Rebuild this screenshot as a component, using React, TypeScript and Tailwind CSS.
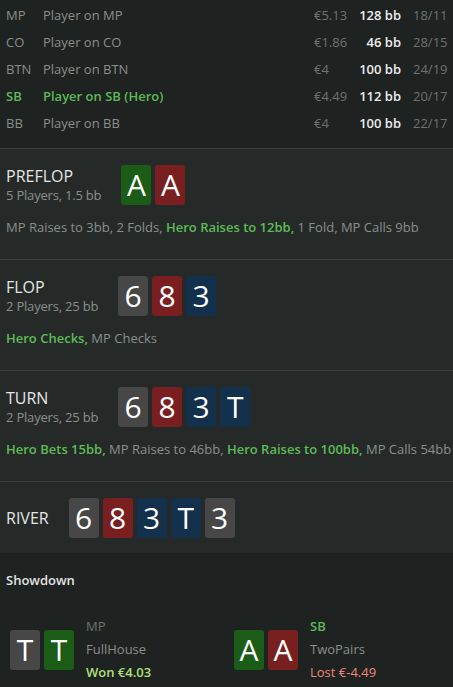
import React from "react";

type Suit = "g" | "r" | "b" | "k";

const suitBg: Record<Suit, string> = {
  g: "bg-[#1b5c17]",
  r: "bg-[#7a1f1f]",
  b: "bg-[#13314c]",
  k: "bg-[#474747]",
};

const Card = ({ rank, suit }: { rank: string; suit: Suit }) => (
  <div
    className={`w-[30px] h-[40px] rounded-[3px] flex items-center justify-center text-white text-[30px] leading-none ${suitBg[suit]}`}
  >
    {rank}
  </div>
);

const players = [
  { pos: "MP", name: "Player on MP", stake: "€5.13", bb: "128 bb", stats: "18/11" },
  { pos: "CO", name: "Player on CO", stake: "€1.86", bb: "46 bb", stats: "28/15" },
  { pos: "BTN", name: "Player on BTN", stake: "€4", bb: "100 bb", stats: "24/19" },
  { pos: "SB", name: "Player on SB (Hero)", stake: "€4.49", bb: "112 bb", stats: "20/17", hero: true },
  { pos: "BB", name: "Player on BB", stake: "€4", bb: "100 bb", stats: "22/17" },
];

type Act = { text: string; hero?: boolean };

const Street = ({
  title,
  sub,
  cards,
  actions,
}: {
  title: string;
  sub?: string;
  cards: [string, Suit][];
  actions?: Act[];
}) => (
  <section className={`bg-[#252a28] border-t border-[#3b3f3d] px-[6px] pt-4 ${actions ? "pb-[22px]" : "pb-[15px]"}`}>
    <div className="flex items-center gap-[20px]">
      <div className="flex flex-col">
        <div className="text-[16px] leading-[20px] text-[#e6e6e6]">{title}</div>
        {sub && <div className="text-[13px] leading-[18px] text-[#8b8e8d] tracking-[-0.2px]">{sub}</div>}
      </div>
      <div className="flex gap-[4px]">
        {cards.map(([r, s], i) => (
          <Card key={i} rank={r} suit={s} />
        ))}
      </div>
    </div>
    {actions && (
      <div className="mt-3 text-[13px] leading-[20px] text-[#8b8e8d] whitespace-nowrap">
        {actions.map((a, i) => (
          <span key={i} className={a.hero ? "font-semibold text-[#5dba57]" : ""}>
            {a.text}
            {i < actions.length - 1 ? ", " : ""}
          </span>
        ))}
      </div>
    )}
  </section>
);

export default function App() {
  return (
    <div className="w-[453px] h-[687px] overflow-hidden bg-[#1e2220] font-['Open_Sans',sans-serif]">
      {/* Players table */}
      <div className="px-[6px] pt-[2px] pb-[11px] text-[13px]">
        {players.map((p) => (
          <div key={p.pos} className="flex items-center h-[27px]">
            <div className={`w-[37px] ${p.hero ? "font-semibold text-[#5dba57]" : "text-[#8b8e8d]"}`}>{p.pos}</div>
            <div className={`flex-1 ${p.hero ? "font-semibold text-[#5dba57]" : "text-[#8b8e8d]"}`}>{p.name}</div>
            <div className="w-[45px] text-[#6f7271]">{p.stake}</div>
            <div className="w-[42px] text-right font-semibold text-[#ececec] whitespace-nowrap">{p.bb}</div>
            <div className="w-[34px] ml-[12px] text-[#6f7271]">{p.stats}</div>
          </div>
        ))}
      </div>

      <Street
        title="PREFLOP"
        sub="5 Players, 1.5 bb"
        cards={[["A", "g"], ["A", "r"]]}
        actions={[
          { text: "MP Raises to 3bb" },
          { text: "2 Folds" },
          { text: "Hero Raises to 12bb", hero: true },
          { text: "1 Fold" },
          { text: "MP Calls 9bb" },
        ]}
      />
      <Street
        title="FLOP"
        sub="2 Players, 25 bb"
        cards={[["6", "k"], ["8", "r"], ["3", "b"]]}
        actions={[{ text: "Hero Checks", hero: true }, { text: "MP Checks" }]}
      />
      <Street
        title="TURN"
        sub="2 Players, 25 bb"
        cards={[["6", "k"], ["8", "r"], ["3", "b"], ["T", "b"]]}
        actions={[
          { text: "Hero Bets 15bb", hero: true },
          { text: "MP Raises to 46bb" },
          { text: "Hero Raises to 100bb", hero: true },
          { text: "MP Calls 54bb" },
        ]}
      />
      <Street title="RIVER" cards={[["6", "k"], ["8", "r"], ["3", "b"], ["T", "b"], ["3", "k"]]} />

      {/* Showdown */}
      <div className="px-[6px] pt-[18px]">
        <div className="text-[13px] leading-[18px] font-semibold text-[#e2e2e2]">Showdown</div>
        <div className="flex mt-[26px] pl-[4px]">
          <div className="w-[224px] flex items-center gap-[12px]">
            <div className="flex gap-[4px]">
              <Card rank="T" suit="k" />
              <Card rank="T" suit="g" />
            </div>
            <div className="flex flex-col text-[13px] leading-[23px]">
              <span className="text-[#6f7271]">MP</span>
              <span className="text-[#8b8e8d]">FullHouse</span>
              <span className="font-semibold text-[#aee07c]">Won €4.03</span>
            </div>
          </div>
          <div className="flex items-center gap-[12px]">
            <div className="flex gap-[4px]">
              <Card rank="A" suit="g" />
              <Card rank="A" suit="r" />
            </div>
            <div className="flex flex-col text-[13px] leading-[23px]">
              <span className="font-semibold text-[#5dba57]">SB</span>
              <span className="text-[#8b8e8d]">TwoPairs</span>
              <span className="text-[#f0877a]">Lost €-4.49</span>
            </div>
          </div>
        </div>
      </div>
    </div>
  );
}
